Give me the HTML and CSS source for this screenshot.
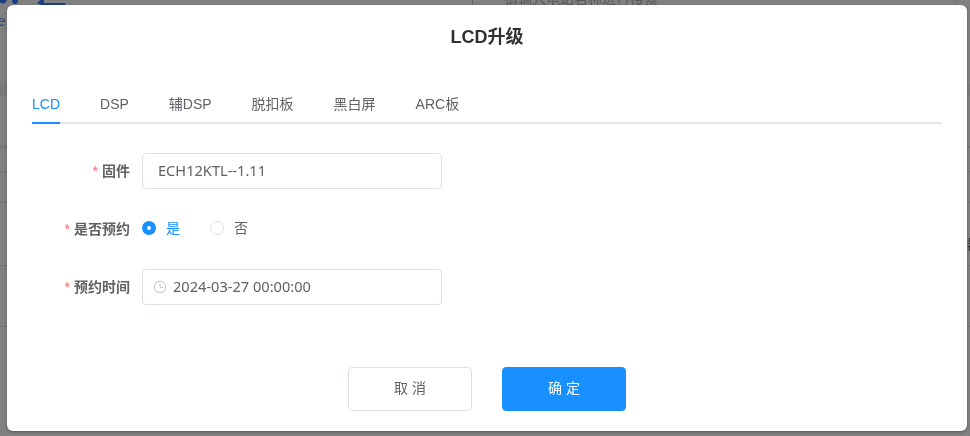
FILE: index.html
```html
<!DOCTYPE html>
<html lang="zh-CN">
<head>
<meta charset="utf-8">
<title>LCD升级</title>
<link rel="stylesheet" href="styles.css">
</head>
<body>
<div class="page-behind">
  <svg class="behind-icons" width="70" height="6" viewBox="0 0 70 6"><circle cx="3" cy="0" r="3.5" fill="#1d3f86"/><circle cx="15" cy="1" r="3" fill="#1d3f86"/><path d="M37 3 L44 -3 V3 H65 V5 H41 Z" fill="#1d3f86"/></svg>
  <span class="behind-e">e</span>
  <i class="behind-bar"></i>
  <span class="behind-search">请输入电站名称进行搜索</span>
  <span class="behind-side">器</span>
  <i class="behind-vline"></i>
  <i class="behind-band"></i>
  <i class="behind-line l1"></i><i class="behind-line l2"></i><i class="behind-line l3"></i><i class="behind-line l4"></i><i class="behind-line l5"></i>
</div>
<div class="overlay">
  <section class="dialog">
    <h2 class="title">LCD升级</h2>
    <nav class="tabs">
      <span class="tab active">LCD</span>
      <span class="tab">DSP</span>
      <span class="tab">辅DSP</span>
      <span class="tab">脱扣板</span>
      <span class="tab">黑白屏</span>
      <span class="tab">ARC板</span>
    </nav>
    <form class="form">
      <div class="row">
        <label class="label"><em>*</em>固件</label>
        <div class="input"><span class="value">ECH12KTL--1.11</span></div>
      </div>
      <div class="row">
        <label class="label"><em>*</em>是否预约</label>
        <div class="radios">
          <span class="radio on"><i class="dot"></i><span class="radio-text">是</span></span>
          <span class="radio"><i class="dot"></i><span class="radio-text">否</span></span>
        </div>
      </div>
      <div class="row">
        <label class="label"><em>*</em>预约时间</label>
        <div class="input date">
          <svg class="clock" width="14" height="14" viewBox="0 0 14 14" fill="none" stroke="#c0c4cc" stroke-width="1"><circle cx="7" cy="7" r="5.7"/><path d="M7 3.4V7.3H10.2"/></svg>
          <span class="value">2024-03-27 00:00:00</span>
        </div>
      </div>
    </form>
    <footer class="actions">
      <button type="button" class="btn">取 消</button>
      <button type="button" class="btn primary">确 定</button>
    </footer>
  </section>
</div>
</body>
</html>
```
FILE: styles.css
```css
* { box-sizing: border-box; }
html, body { margin: 0; height: 100%; overflow: hidden; }
body {
  background: #808080;
  font-family: "Liberation Sans", "Noto Sans CJK SC", sans-serif;
  font-size: 14px;
  color: #606266;
}
.page-behind { position: fixed; inset: 0; }
.behind-icons { position: absolute; left: 0; top: 0; }
.behind-e { position: absolute; left: -2px; top: 13px; font-size: 14px; color: #28467f; }
.behind-bar { position: absolute; left: 472px; top: 0; width: 1px; height: 5px; background: #6a6a6a; }
.behind-search { position: absolute; left: 504px; top: -12px; font-size: 14px; color: #5a5a5a; white-space: nowrap; }
.behind-side { position: absolute; left: 967px; top: 233px; font-size: 14px; color: #303030; }
.behind-vline { position: absolute; left: 956px; top: 0; width: 1px; height: 5px; background: #6e6e6e; }
.behind-band { position: absolute; left: 0; right: 0; top: 84px; height: 12px; background: #7a7a7a; }
.behind-line { position: absolute; left: 0; right: 0; height: 1px; background: #747474; }
.l1 { top: 146px; height: 2px; }
.l2 { top: 171px; }
.l3 { top: 202px; }
.l4 { top: 265px; }
.l5 { top: 326px; }
.overlay { position: fixed; inset: 0; }
.dialog {
  position: absolute;
  left: 7px;
  top: 5px;
  width: 960px;
  height: 426px;
  background: #fff;
  border-radius: 6px;
  box-shadow: 0 1px 3px rgba(0, 0, 0, .3);
  padding: 0 25px;
  display: flex;
  flex-direction: column;
}
.title {
  margin: 0;
  height: 64px;
  line-height: 64px;
  text-align: center;
  font-size: 18px;
  font-weight: 700;
  color: #303133;
}
.tabs {
  margin-top: 15px;
  height: 40px;
  display: flex;
  gap: 40px;
  border-bottom: 2px solid #e4e7ed;
}
.tab { height: 40px; line-height: 40px; color: #606266; }
.tab.active { color: #1890ff; border-bottom: 2px solid #1890ff; }
.form { margin-top: 29px; display: flex; flex-direction: column; gap: 22px; }
.row { display: flex; align-items: center; height: 36px; gap: 12px; }
.label {
  width: 98px;
  padding-bottom: 3px;
  text-align: right;
  font-weight: 700;
  font-size: 14px;
  color: #606266;
  white-space: nowrap;
}
.label em { color: #f56c6c; font-style: normal; font-weight: 400; margin-right: 4px; }
.input {
  width: 300px;
  height: 36px;
  border: 1px solid #dcdfe6;
  border-radius: 4px;
  padding: 0 15px;
  display: flex;
  align-items: center;
}
.value { font-family: "Noto Sans", "Liberation Sans", sans-serif; font-size: 14.6px; padding-bottom: 2px; }
.input.date { padding-left: 10px; gap: 6px; }
.clock { flex: none; }
.radios { display: flex; gap: 30px; padding-bottom: 2px; }
.radio { display: flex; align-items: center; gap: 10px; color: #606266; }
.radio.on { color: #1890ff; }
.radio-text { padding-bottom: 2px; }
.dot {
  width: 14px;
  height: 14px;
  border: 1px solid #dcdfe6;
  border-radius: 50%;
  background: #fff;
  display: block;
}
.radio.on .dot { border: 5px solid #1890ff; }
.actions {
  margin-top: 62px;
  display: flex;
  justify-content: center;
  gap: 30px;
}
.btn {
  width: 124px;
  height: 44px;
  border: 1px solid #dcdfe6;
  border-radius: 4px;
  background: #fff;
  color: #606266;
  font: inherit;
  font-size: 14px;
  padding: 0 0 4px;
}
.btn.primary { background: #1890ff; border-color: #1890ff; color: #fff; }
```
